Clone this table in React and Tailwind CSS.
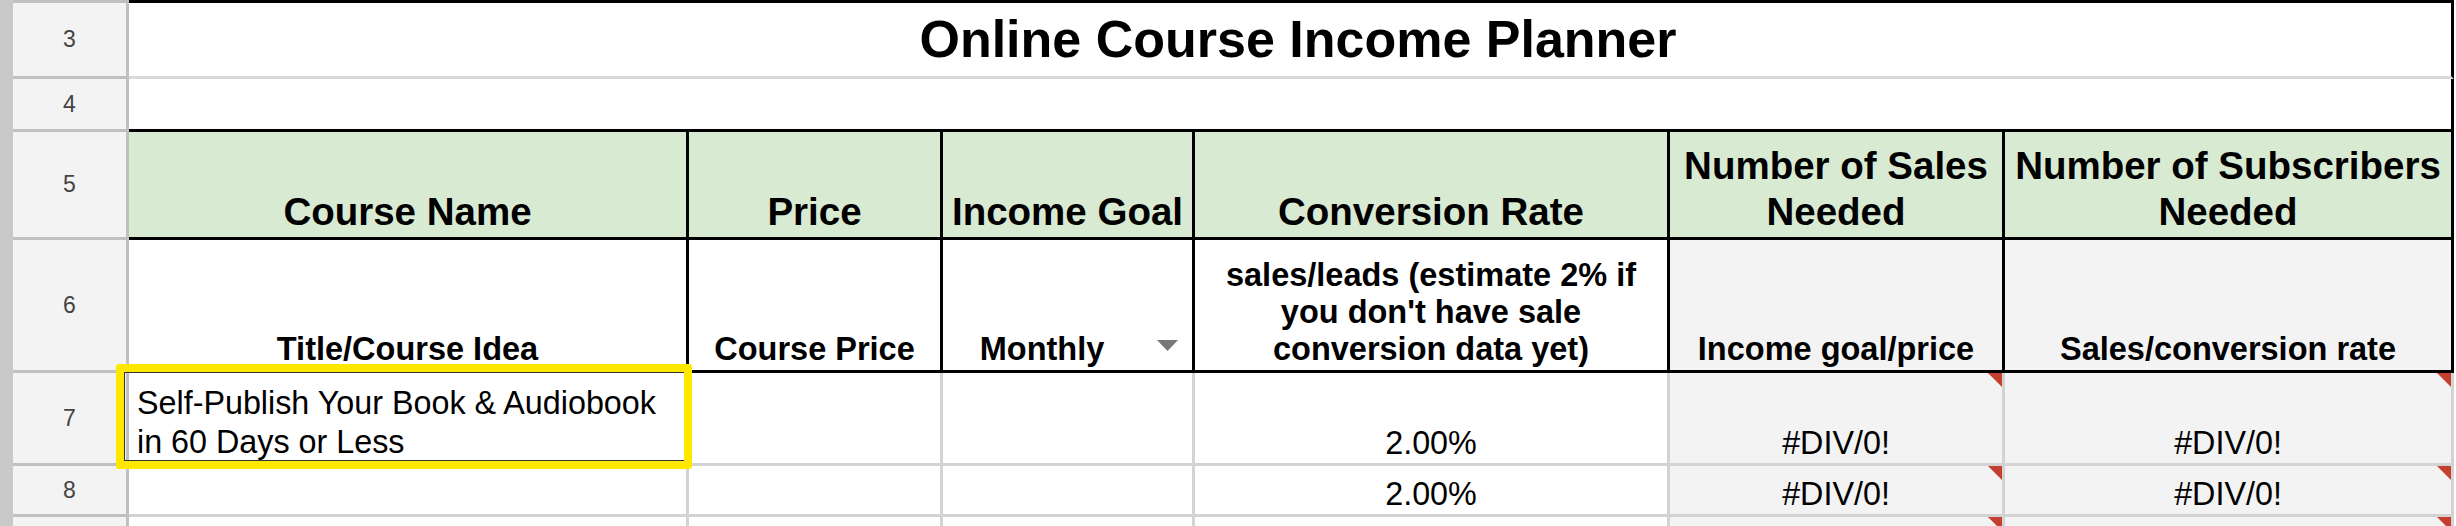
import React from "react";

function RowHead({ n, h }) {
  return (
    <div
      className={`flex w-[116px] shrink-0 items-center justify-center border-r-[3px] border-b-[3px] border-[#c0c0c0] bg-[#f3f3f3] text-[23px] text-[#444] ${h}`}
    >
      {n}
    </div>
  );
}

function Tri() {
  return (
    <svg className="absolute right-0 top-0" width="14" height="14" viewBox="0 0 14 14">
      <polygon points="0,0 14,0 14,14" fill="#c53f2e" />
    </svg>
  );
}

const W = ["w-[560px]", "w-[254px]", "w-[252px]", "w-[475px]", "w-[335px]", "w-[449px]"];

export default function App() {
  const hdr =
    "flex shrink-0 items-end justify-center border-r-[3px] border-b-[3px] border-black bg-[#d9ead3] px-[4px] pb-[2px] text-center text-[38.5px] font-bold leading-[46px]";
  const sub =
    "flex shrink-0 items-end justify-center border-r-[3px] border-b-[3px] border-black px-[4px] pb-[2px] text-center text-[32.5px] font-bold leading-[37px]";
  const grid = "relative flex shrink-0 border-r-[3px] border-b-[3px] border-[#d3d3d3]";
  return (
    <div className="relative flex h-[526px] w-[2456px] overflow-hidden bg-white font-['Liberation_Sans',Arial,sans-serif] text-black">
      <div className="w-[13px] shrink-0 bg-[#c9c9c9]" />
      <div className="flex flex-col">
        {/* top line */}
        <div className="flex h-[3px] shrink-0">
          <div className="w-[116px] bg-[#c0c0c0]" />
          <div className="w-[2325px] bg-black" />
        </div>

        {/* row 3 */}
        <div className="flex h-[76px] shrink-0">
          <RowHead n="3" h="h-[76px]" />
          <div className="flex w-[2325px] items-center justify-center border-r-[3px] border-b-[3px] border-r-black border-b-[#d9d9d9] pb-[2px] pl-[16px] text-[52px] font-bold leading-none">
            Online Course Income Planner
          </div>
        </div>

        {/* row 4 */}
        <div className="flex h-[53px] shrink-0">
          <RowHead n="4" h="h-[53px]" />
          <div className="w-[2325px] border-r-[3px] border-b-[3px] border-black" />
        </div>

        {/* row 5 */}
        <div className="flex h-[108px] shrink-0">
          <RowHead n="5" h="h-[108px]" />
          <div className={`${hdr} ${W[0]}`}>Course Name</div>
          <div className={`${hdr} ${W[1]}`}>Price</div>
          <div className={`${hdr} ${W[2]}`}>Income Goal</div>
          <div className={`${hdr} ${W[3]}`}>Conversion Rate</div>
          <div className={`${hdr} ${W[4]}`}>Number of Sales Needed</div>
          <div className={`${hdr} ${W[5]}`}>Number of Subscribers Needed</div>
        </div>

        {/* row 6 */}
        <div className="flex h-[133px] shrink-0">
          <RowHead n="6" h="h-[133px]" />
          <div className={`${sub} ${W[0]}`}>Title/Course Idea</div>
          <div className={`${sub} ${W[1]}`}>Course Price</div>
          <div className={`flex shrink-0 items-end border-r-[3px] border-b-[3px] border-black pb-[2px] text-[32.5px] font-bold leading-[37px] ${W[2]}`}>
            <div className="flex-1 text-center">Monthly</div>
            <div className="flex w-[51px] shrink-0 self-end pb-[17px] pl-[16px]">
              <svg width="21" height="11" viewBox="0 0 21 11">
                <polygon points="0,0 21,0 10.5,11" fill="#777777" />
              </svg>
            </div>
          </div>
          <div className={`${sub} ${W[3]}`}>
            sales/leads (estimate 2% if you don't have sale conversion data yet)
          </div>
          <div className={`${sub} ${W[4]} bg-[#f3f3f3]`}>Income goal/price</div>
          <div className={`${sub} ${W[5]} bg-[#f3f3f3]`}>Sales/conversion rate</div>
        </div>

        {/* row 7 */}
        <div className="flex h-[93px] shrink-0">
          <RowHead n="7" h="h-[93px]" />
          <div className={`${grid} ${W[0]} items-end pb-[1px] pl-[8px] text-[32.3px] leading-[39px]`}>
            <div>
              Self-Publish Your Book &amp; Audiobook
              <br />
              in 60 Days or Less
            </div>
          </div>
          <div className={`${grid} ${W[1]}`} />
          <div className={`${grid} ${W[2]}`} />
          <div className={`${grid} ${W[3]} items-end justify-center pb-[0px] text-[32.3px] leading-[39px]`}>2.00%</div>
          <div className={`${grid} ${W[4]} items-end justify-center bg-[#f3f3f3] pb-[0px] text-[32.3px] leading-[39px]`}>
            #DIV/0!
            <Tri />
          </div>
          <div className={`${grid} ${W[5]} items-end justify-center bg-[#f3f3f3] pb-[0px] text-[32.3px] leading-[39px]`}>
            #DIV/0!
            <Tri />
          </div>
        </div>

        {/* row 8 */}
        <div className="flex h-[51px] shrink-0">
          <RowHead n="8" h="h-[51px]" />
          <div className={`${grid} ${W[0]}`} />
          <div className={`${grid} ${W[1]}`} />
          <div className={`${grid} ${W[2]}`} />
          <div className={`${grid} ${W[3]} items-end justify-center pb-[0px] text-[32.3px] leading-[39px]`}>2.00%</div>
          <div className={`${grid} ${W[4]} items-end justify-center bg-[#f3f3f3] pb-[0px] text-[32.3px] leading-[39px]`}>
            #DIV/0!
            <Tri />
          </div>
          <div className={`${grid} ${W[5]} items-end justify-center bg-[#f3f3f3] pb-[0px] text-[32.3px] leading-[39px]`}>
            #DIV/0!
            <Tri />
          </div>
        </div>

        {/* row 9 (partially visible, number below the fold) */}
        <div className="flex h-[51px] shrink-0">
          <RowHead n="" h="h-[51px]" />
          <div className={`${grid} ${W[0]}`} />
          <div className={`${grid} ${W[1]}`} />
          <div className={`${grid} ${W[2]}`} />
          <div className={`${grid} ${W[3]}`} />
          <div className={`${grid} ${W[4]} bg-[#f3f3f3]`}>
            <Tri />
          </div>
          <div className={`${grid} ${W[5]} bg-[#f3f3f3]`}>
            <Tri />
          </div>
        </div>
      </div>

      {/* selection highlight */}
      <div className="absolute left-[116px] top-[364px] h-[105px] w-[576px] rounded-[3px] border-[8px] border-[#ffe800]">
        <div className="h-full w-full border-y border-l border-[#333]" />
      </div>
    </div>
  );
}
